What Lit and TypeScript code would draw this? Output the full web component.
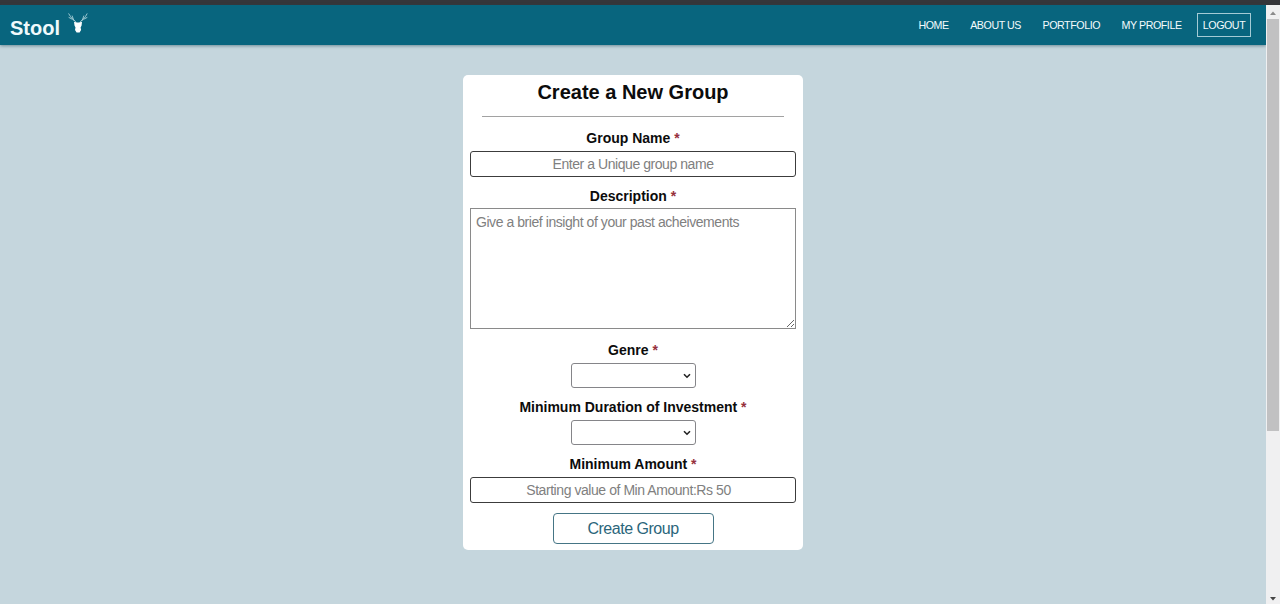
import { LitElement, html, css } from "lit";
import { customElement } from "lit/decorators.js";

@customElement("nav-bar")
class NavBar extends LitElement {
  static styles = css`
    :host {
      display: flex;
      align-items: center;
      justify-content: space-between;
      box-sizing: border-box;
      height: 40px;
      padding: 0 15px 0 10px;
      background: #08657e;
      color: #fff;
      box-shadow: 0 1px 3px rgba(40, 80, 95, 0.55);
    }
    .brand {
      display: flex;
      align-items: flex-start;
      gap: 7px;
      height: 40px;
      font-size: 20px;
      font-weight: bold;
      line-height: 47px;
      color: #f0fafc;
    }
    .logo {
      margin-top: 7px;
      display: block;
    }
    .links {
      display: flex;
      align-items: center;
      font-size: 10.67px;
      line-height: 22px;
      letter-spacing: -0.42px;
    }
    .link {
      color: #f4fbfd;
      text-decoration: none;
      margin-right: 21.4px;
      white-space: nowrap;
    }
    .last {
      margin-right: 15.4px;
    }
    .logout {
      box-sizing: border-box;
      width: 54px;
      height: 24px;
      border: 1px solid #a5cbd5;
      text-align: center;
      margin: 0;
    }
  `;
  render() {
    return html`
      <div class="brand">
        <span>Stool</span>
        <svg class="logo" width="22" height="22" viewBox="0 0 22 22">
          <g fill="none" stroke="#a9d0d8" stroke-width="0.9" stroke-linecap="round">
            <path d="M9 10.5C8 7.5 5 7.5 3.5 4.5L1.8 1.8M5.2 7.2L2 5.5M6.8 8.5L5.2 4" />
            <path d="M13 10.5C14 7.5 17 7.5 18.5 4.5L20 1.8M16.8 7.2L20 5.5M15.2 8.5L16.8 4" />
          </g>
          <path
            fill="#fff"
            d="M7 9.7L9.8 10.5H12.2L15 9.7L14.6 13.5L13.6 15.5L14.1 18L12.6 20.5H9.6L8 18L8.5 15.5L7.5 13.5Z"
          />
        </svg>
      </div>
      <nav class="links">
        <a class="link">HOME</a>
        <a class="link">ABOUT US</a>
        <a class="link">PORTFOLIO</a>
        <a class="link last">MY PROFILE</a>
        <a class="link logout">LOGOUT</a>
      </nav>
    `;
  }
}

@customElement("scroll-rail")
class ScrollRail extends LitElement {
  static styles = css`
    :host {
      display: flex;
      flex-direction: column;
      align-items: center;
      box-sizing: border-box;
      width: 14px;
      background: #f0f0f1;
    }
    .arrow {
      display: block;
      flex: none;
    }
    .thumb {
      width: 12px;
      height: 412px;
      background: #c1c1c2;
    }
    .space {
      flex: 1;
    }
  `;
  render() {
    return html`
      <svg class="arrow" width="14" height="14"><path d="M4 10L7 6.5L10 10Z" fill="#8b8b8b" /></svg>
      <div class="thumb"></div>
      <div class="space"></div>
      <svg class="arrow" width="14" height="14"><path d="M4 7L7 10.5L10 7Z" fill="#454545" /></svg>
    `;
  }
}

@customElement("group-form")
class GroupForm extends LitElement {
  static styles = css`
    :host {
      display: flex;
      flex-direction: column;
      align-items: center;
      box-sizing: border-box;
      width: 340px;
      height: 475px;
      padding: 0 7px;
      background: #fff;
      border-radius: 5px;
      color: #0c0c0c;
    }
    .title {
      margin: 0;
      font-size: 20px;
      line-height: 34px;
    }
    .rule {
      width: 302px;
      height: 1px;
      background: #a2a2a2;
      margin: 7px 0 2px;
    }
    .label {
      margin: 10px 0 4px;
      font-size: 14px;
      font-weight: bold;
      line-height: 18px;
    }
    .star {
      color: #96303c;
    }
    .input,
    .area,
    .select {
      box-sizing: border-box;
      margin: 0;
      background: #fff;
      font: 14px "Liberation Sans", Arial, sans-serif;
      letter-spacing: -0.44px;
      outline: none;
    }
    .input {
      width: 326px;
      height: 26px;
      padding: 0 5px 1px;
      border: 1px solid #3c3c3c;
      border-radius: 3px;
      text-align: center;
    }
    .amount {
      padding-right: 14px;
    }
    .area {
      display: block;
      width: 326px;
      height: 121px;
      margin: -1px 0 2px;
      padding: 5px;
      border: 1px solid #8a8a8a;
      resize: both;
    }
    ::placeholder {
      color: #808080;
      opacity: 1;
    }
    .select {
      display: flex;
      align-items: center;
      justify-content: flex-end;
      width: 125px;
      height: 25px;
      padding-right: 4px;
      border: 1px solid #858589;
      border-radius: 3px;
    }
    .button {
      box-sizing: border-box;
      width: 161px;
      height: 31px;
      margin: 10px 0 0;
      padding: 0;
      border: 1px solid #457585;
      border-radius: 4px;
      background: #fff;
      color: #2b667b;
      font: 16px "Liberation Sans", Arial, sans-serif;
      letter-spacing: -0.48px;
    }
  `;
  private label(text: string) {
    return html`<label class="label">${text} <span class="star">*</span></label>`;
  }
  private select(name: string) {
    return html`<div class="select" role="combobox" aria-label=${name} tabindex="0">
      <svg width="8" height="6"><path d="M1 1.2L4 4.2L7 1.2" fill="none" stroke="#222" stroke-width="1.6" /></svg>
    </div>`;
  }
  render() {
    return html`
      <h2 class="title">Create a New Group</h2>
      <div class="rule"></div>
      ${this.label("Group Name")}
      <input class="input" placeholder="Enter a Unique group name" />
      ${this.label("Description")}
      <textarea class="area" placeholder="Give a brief insight of your past acheivements"></textarea>
      ${this.label("Genre")} ${this.select("Genre")}
      ${this.label("Minimum Duration of Investment")} ${this.select("Minimum Duration of Investment")}
      ${this.label("Minimum Amount")}
      <input class="input amount" placeholder="Starting value of Min Amount:Rs 50" />
      <button class="button">Create Group</button>
    `;
  }
}

@customElement("app-root")
class AppRoot extends LitElement {
  static styles = css`
    :host {
      display: flex;
      flex-direction: column;
      height: 604px;
      overflow: hidden;
      background: #c5d6dd;
      font-family: "Liberation Sans", Arial, sans-serif;
    }
    .chrome {
      height: 5px;
      flex: none;
      background: #35363a;
    }
    .view {
      display: flex;
      flex: 1;
      min-height: 0;
    }
    .page {
      flex: 1;
    }
    .content {
      display: flex;
      justify-content: center;
      padding-top: 30px;
    }
  `;
  render() {
    return html`
      <div class="chrome"></div>
      <div class="view">
        <main class="page">
          <nav-bar></nav-bar>
          <div class="content"><group-form></group-form></div>
        </main>
        <scroll-rail></scroll-rail>
      </div>
    `;
  }
}
